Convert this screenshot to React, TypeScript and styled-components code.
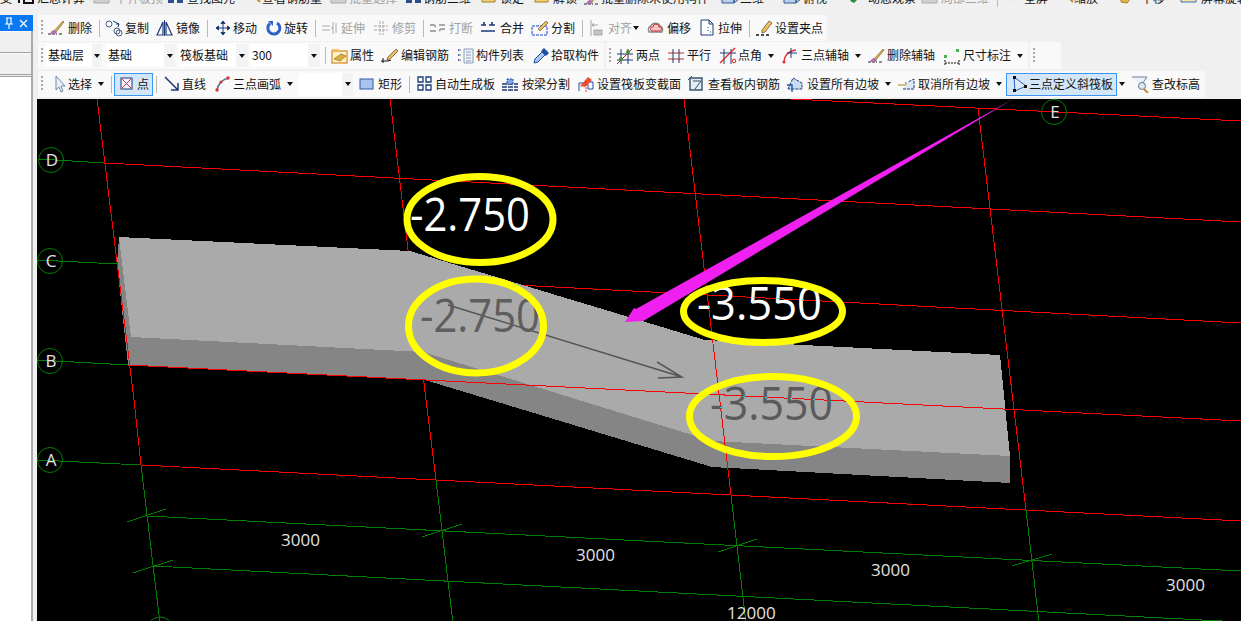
import React from 'react';
import styled, { createGlobalStyle } from 'styled-components';

const Global = createGlobalStyle`
  html, body { margin: 0; padding: 0; background: #f0f0f0; overflow: hidden; }
  body { font: 12px "Noto Sans CJK SC", "Liberation Sans", sans-serif; color: #111; }
`;

const Page = styled.div`
  width: 1241px; height: 621px; overflow: hidden; background: #f0f0f0;
  display: flex; flex-direction: column;
`;
const TopStrip = styled.div`height: 15px; flex: none; overflow: hidden;`;
const TopRow = styled.div`display: flex; align-items: center; height: 20px; margin-top: -12px;`;
const Main = styled.div`flex: 1; display: flex; min-height: 0;`;
const Dock = styled.aside`
  width: 33px; flex: none; margin-right: 4px; display: flex; flex-direction: column;
  border-right: 2px solid #a9a9a9; box-sizing: border-box;
`;
const DockHead = styled.div`
  height: 16px; flex: none; background: #0a78f0; color: #fff; margin-right: -2px;
  display: flex; align-items: center; justify-content: space-between; padding: 0 5px 0 4px; box-sizing: border-box;
`;
const DockTab = styled.div`
  height: 22px; flex: none; background: #f0f0f0; border-bottom: 1px solid #a0a0a0;
  border-top: 1px solid #fafafa; box-sizing: border-box;
  &:first-of-type { height: 23px; }
`;
const DockBody = styled.div`flex: 1; background: #fff; margin-top: 1px; border-top: 1px solid #a0a0a0;`;
const Work = styled.div`flex: 1; min-width: 0; display: flex; flex-direction: column;`;
const Row = styled.div<{ $h: number; $gap: number }>`
  display: flex; gap: 2px; padding-left: 1px; flex: none;
  height: ${p => p.$h}px; margin-bottom: ${p => p.$gap}px;
`;
const Bar = styled.div<{ $w: number }>`
  width: ${p => p.$w}px; flex: none; height: 100%; background: #f9f9f9; display: flex; align-items: center;
  border-radius: 2px;
`;
const Grip = styled.div<{ $w: number }>`
  width: ${p => p.$w}px; flex: none; height: 16px; position: relative;
  &::before {
    content: ''; display: block; margin-left: 3px; width: 2px; height: 100%;
    background: repeating-linear-gradient(to bottom, #a6a6a6 0 2px, transparent 2px 4px);
  }
`;
const Tool = styled.div<{ $w: number; $on?: boolean; $off?: boolean }>`
  width: ${p => p.$w}px; flex: none; display: flex; align-items: center; white-space: nowrap; box-sizing: border-box;
  color: ${p => (p.$off ? '#a2a2a2' : '#141414')};
  ${p => p.$on && 'height: 23px; background: #d3e6f8; outline: 1px solid #3a96f0; outline-offset: -1px;'}
`;
const ToolLabel = styled.span`margin-bottom: 2px;`;
const IconSlot = styled.span<{ $w: number; $pad: number }>`
  width: ${p => p.$w}px; padding-left: ${p => p.$pad}px; box-sizing: border-box; flex: none; display: flex; align-items: center;
`;
const Gap = styled.div<{ $w: number }>`width: ${p => p.$w}px; flex: none;`;
const Sep = styled.div<{ $w: number }>`
  width: ${p => p.$w}px; flex: none; height: 17px;
  &::before { content: ''; display: block; width: 1px; height: 100%; background: #b8b8b8; }
`;
const CaretSlot = styled.div<{ $w: number }>`width: ${p => p.$w}px; flex: none; display: flex; align-items: center;`;
const Caret = styled.i`
  display: block; width: 0; height: 0; margin-left: -3px;
  border-left: 3.5px solid transparent; border-right: 3.5px solid transparent; border-top: 4px solid #111;
`;
const Select = styled.div<{ $w: number }>`
  width: ${p => p.$w}px; flex: none; height: 23px; display: flex; background: #fff;
`;
const SelectText = styled.span`flex: 1; line-height: 21px; padding-left: 2px;`;
const SelectArrow = styled.span<{ $w: number }>`
  width: ${p => p.$w}px; flex: none; background: #f3f3f3; display: flex; align-items: center; justify-content: center;
  & > i { margin-left: 0; }
`;
const Canvas = styled.main`flex: 1; background: #000; min-height: 0;`;
const Scene = styled.svg`display: block; width: 100%; height: 100%;`;
const Grid = styled.polyline<{ $c: string }>`
  fill: none; stroke: ${p => p.$c}; stroke-width: 1; shape-rendering: crispEdges;
`;
const Face = styled.polygon<{ $c: string }>`fill: ${p => p.$c}; shape-rendering: crispEdges;`;
const Ring = styled.ellipse`fill: none; stroke: #ffff00; stroke-width: 7;`;
const AxisCircle = styled.circle`fill: none; stroke: #008000; stroke-width: 1;`;
const AxisName = styled.text`
  font-family: "Open Sans", sans-serif; font-size: 17px; fill: #e4e4e4; text-anchor: middle;
`;
const Dim = styled.text`font-family: "Open Sans", sans-serif; font-size: 17px; fill: #e2e2e2;`;
const Elev = styled.text<{ $c: string }>`font-family: "Open Sans", sans-serif; font-size: 46px; fill: ${p => p.$c};`;
const Direction = styled.path`fill: none; stroke: #555; stroke-width: 1.5;`;
const Speck = styled.rect`fill: #20e0e0; width: 2px; height: 1px;`;

const N = '#1c3a78';
const G = '#a8a8a8';
const R = '#e03030';
const I: Record<string, React.ReactNode> = {
  broom: <><path d="M1 15h9M12 15h4" stroke="#222" strokeDasharray="3 1" /><path d="M7 12 16 2l1 1-8 10z" fill="#d8b24a" stroke="#6a5a20" strokeWidth=".6" /><path d="M3 15c1-3 3-4 4-4l3 2c-1 1-1 2-2 2z" fill="#b070b0" /></>,
  copy: <><circle cx="4" cy="5" r="3" fill="none" stroke="#48607e" /><circle cx="12" cy="12" r="3" fill="none" stroke="#48607e" /><circle cx="14" cy="14" r="3" fill="none" stroke="#48607e" /><path d="M8 2l6 3M14 5l-3 0M14 5l-1 3" stroke={N} fill="none" /></>,
  mirror: <><path d="M1 16 7 3v13z" fill="none" stroke={N} strokeWidth="1.2" /><path d="M16 16 10 3v13z" fill="none" stroke={N} strokeWidth="1.2" /><path d="M8.5 1v16" stroke={N} /></>,
  move: <path d="M9 2v14M2 9h14M9 2 7 4.5h4zM9 16l-2-2.5h4zM2 9l2.5-2v4zM16 9l-2.5-2v4z" fill={N} stroke={N} />,
  rotate: <><path d="M5 4.5a6 6 0 1 0 7-.5" fill="none" stroke="#2f62c8" strokeWidth="3" /><path d="M3 2h5v5z" fill="#2f62c8" /></>,
  extend: <path d="M1 7h8M1 11h8M12 3v12M15 4v10M10 9h2" stroke={G} fill="none" />,
  trim: <path d="M1 7h14M1 11h14M7 2v14M10 2v14" stroke={G} fill="none" strokeDasharray="3 1" />,
  brk: <path d="M1 6h4l2 2M10 6h6M1 12h6M10 12l2-2h4" stroke={G} strokeWidth="2" fill="none" />,
  merge: <path d="M1 6h5M9 6h6M1 12h14M4 3v3M12 3v3" stroke={N} strokeWidth="1.6" fill="none" />,
  split: <><rect x="1" y="7" width="15" height="9" fill="none" stroke="#1a40d0" strokeDasharray="3 1" /><path d="M7 10 15 2l2 2-8 8z" fill="#e8c060" stroke="#504020" strokeWidth=".6" /></>,
  align: <path d="M2 1v16M5 4l-2 2 2 2M4 6h5M5 11h8v5H5z" fill="#c4c4c4" stroke={G} />,
  offset: <><path d="M2 13a4 4 0 0 1 2-6 5 5 0 0 1 9 0 4 4 0 0 1 2 6z" fill="#f4f4f4" stroke="#888" strokeWidth="1.4" /><path d="M5 12a2 2 0 0 1 1-4 3 3 0 0 1 6 0 2 2 0 0 1 1 4z" fill="#f7c4c4" stroke="#d03030" /></>,
  stretch: <path d="M2 1h8l4 4v11H2zM10 1v4h4M9 8v1M9 11v1M11 13h1" fill="#fff" stroke={N} />,
  grip: <><path d="M1 16h3M6 16h3M11 16h3" stroke="#111" strokeWidth="1.5" /><path d="M7 11 14 2l3 2-7 9-3 1z" fill="#e8c060" stroke="#704020" strokeWidth=".7" /></>,
  prop: <><rect x="1" y="4" width="15" height="12" fill="#fff0c8" stroke="#d89030" strokeWidth="1.3" /><path d="M3 12 10 7l5 2-6 5z" fill="#d8b040" stroke="#886018" strokeWidth=".6" /><path d="M1 2h7v2H1z" fill="#f0c070" /></>,
  edit: <><path d="M0 14h7l3-1" stroke="#111" fill="none" /><path d="M7 10 15 2l2 2-8 8-3 1z" fill="#e8c060" stroke="#704020" strokeWidth=".7" /><path d="M2 11v5" stroke="#111" /></>,
  list: <><path d="M7 2h9v14H7z" fill="#eef3fa" stroke="#8a9cb4" /><path d="M9 5h5M9 8h5M9 11h5M9 14h5" stroke="#8a9cb4" /><path d="M1 3h3M1 8h3M1 13h3" stroke={N} strokeWidth="1.4" strokeDasharray="1.5 1" /></>,
  pick: <><path d="M2 16l1-4 7-7 3 3-7 7z" fill="#a8c8f0" stroke="#2050a0" /><path d="M9 4l3-3 5 5-3 3z" fill="#2050a0" /></>,
  two: <><path d="M5 2v15M12 2v15M1 7h16M1 13h16" stroke={N} fill="none" /><path d="M1 17 16 2" stroke="#c82020" /><circle cx="12" cy="5" r="2" fill="#4a9030" /><circle cx="5" cy="12" r="2" fill="#4a9030" /></>,
  par2: <><path d="M1 6h16M1 12h16" stroke="#c02828" /><path d="M6 2v14M12 2v14" stroke={N} /></>,
  ang: <><path d="M5 2v15M12 2v15M1 6h16" stroke={N} /><path d="M1 16 16 1" stroke="#e02020" strokeWidth="1.3" /><circle cx="15" cy="14" r="1.8" fill="none" stroke="#e02020" /></>,
  arcx: <><path d="M3 16C3 8 8 4 15 3" fill="none" stroke="#e03030" strokeWidth="1.3" /><path d="M10 1v10M6 6h10" stroke={N} /><circle cx="3" cy="15" r="1.5" fill="#e03030" /></>,
  dim: <><path d="M2 16h14M2 13v5M16 13v5" stroke="#111" strokeDasharray="2 1" /><rect x="1" y="8" width="3" height="3" fill="#50b050" /><rect x="13" y="2" width="3" height="3" fill="#50b050" /></>,
  sel: <path d="M5 1v14l3-3 2 5 2-1-2-5h4z" fill="#e8f0fa" stroke="#7088a8" />,
  pt: <><rect x="2" y="3" width="11" height="11" fill="#eef4fc" stroke={N} /><path d="M2 3l11 11M13 3 2 14" stroke="#e03050" /></>,
  line: <path d="M2 2 15 15M15 8v7H8" fill="none" stroke={N} strokeWidth="1.5" />,
  arc: <><path d="M3 15C4 9 8 5 14 3" fill="none" stroke="#507090" strokeWidth="1.5" /><circle cx="3" cy="15" r="1.7" fill={R} /><circle cx="7" cy="7" r="1.5" fill={R} /><circle cx="14" cy="3" r="1.7" fill={R} /></>,
  rect: <rect x="2" y="4" width="13" height="10" fill="#a8c4ee" stroke="#3058a8" />,
  auto: <path d="M2 2h5v5H2zM10 2h5v5h-5zM2 10h5v5H2zM10 10h5v5h-5z" fill="#fff" stroke={N} strokeWidth="1.3" />,
  beam: <><path d="M1 9h16M1 15h16M1 12h16" stroke={N} strokeDasharray="5 1" strokeWidth="1.4" /><path d="M6 4h6v5H6z" fill="#80a8e8" stroke="#2850a0" strokeDasharray="2 1" /></>,
  vary: <><path d="M2 16V8h9v6h5V7h-5" fill="none" stroke="#1850a8" /><path d="M3 11 11 2l4 3-7 7z" fill="#f05030" /><path d="M9 6v12" stroke="#e03030" strokeDasharray="2 1" /></>,
  view: <><path d="M3 3h12v12H3z" fill="#e4ecf6" stroke="#38506c" strokeWidth="1.4" /><path d="M6 6h8L8 14" fill="none" stroke="#38506c" /><path d="M1 5 5 1" stroke="#38506c" /></>,
  setb: <><path d="M2 14 7 3l9 5v6z" fill="#c8dcf4" stroke={N} strokeDasharray="3 1" /><path d="M1 10h5v7" fill="none" stroke="#1850a8" strokeWidth="1.3" /></>,
  cancel: <><path d="M1 10h10M8 7l4 3-4 3" fill="#f0c850" stroke="#a08020" /><path d="M6 14h11V4l-6 3" fill="#dce8f8" stroke={N} strokeDasharray="3 1" /></>,
  slab: <><path d="M3 2 4 16 15 11z" fill="#dce8fa" stroke="#2860c0" /><rect x="2" y="1" width="3" height="3" fill="#111" /><rect x="2" y="14" width="3" height="3" fill="#111" /><rect x="13" y="10" width="3" height="3" fill="#111" /></>,
  elev: <><path d="M1 2h15l-5 7v3" fill="#eef2f8" stroke="#6880a0" /><circle cx="11" cy="11" r="3.5" fill="#dce8f4" stroke="#6a7a88" /><path d="M13 14l4 4" stroke="#c08838" strokeWidth="2" /></>,
  gray: <path d="M1 0h15v14H1z" fill="#cfcfcf" stroke="#aaa" />,
  blue: <path d="M1 0h6v14H1zM10 0h6v14h-6z" fill="#2c4f8c" />,
  glass: <><circle cx="8" cy="4" r="6" fill="#cfe0f2" stroke="#7088a0" /><path d="M12 8l5 5" stroke="#c08838" strokeWidth="2" /></>,
  lock: <path d="M2 0h13v13H2z" fill="#f0d070" stroke="#a08028" />,
  cube: <path d="M1 0h12v14H1zM13 0l5-3v13l-5 4z" fill="#b8d0f0" stroke="#34588c" />,
  green: <path d="M2 12 14 0l3 3L6 14z" fill="#2c8a3c" />,
  hand: <path d="M3 13V0h10v9l-4 5z" fill="#e0b850" stroke="#a88020" />,
  round: <circle cx="9" cy="3" r="8" fill="#3c6cb8" stroke="#d0d8e8" />,
  multi: <path d="M1 0h15v13H1z" fill="#f4e4a0" stroke="#3870c8" />,
  mark: <path d="M1 0v14M6 0h9v14H6z" fill="none" stroke="#111" strokeWidth="2" />,
};
const Icon = ({ k }: { k: string }) => (
  <svg width="18" height="18" viewBox="0 0 18 18" style={{ flex: 'none', display: 'block' }}>{I[k]}</svg>
);

type E =
  | { x: number; kind: 'tool'; i?: string; t?: string; tx: number; on?: boolean; off?: boolean; pad?: number }
  | { x: number; kind: 'grip' | 'sep' | 'caret' | 'gap' }
  | { x: number; kind: 'sel'; t: string; a: number; end: number };
const T = (x: number, i: string | undefined, t: string, tx: number, o: { on?: boolean; off?: boolean; pad?: number } = {}): E => ({ x, kind: 'tool', i, t, tx, ...o });
const S = (x: number): E => ({ x, kind: 'sep' });
const C = (x: number): E => ({ x, kind: 'caret' });
const Gp = (x: number): E => ({ x, kind: 'gap' });
const Gr = (x: number): E => ({ x, kind: 'grip' });
const Sel = (x: number, t: string, a: number, end: number): E => ({ x, kind: 'sel', t, a, end });

const renderEntries = (list: E[], end: number) =>
  list.map((e, n) => {
    const w = (n + 1 < list.length ? list[n + 1].x : end) - e.x;
    switch (e.kind) {
      case 'grip': return <Grip key={n} $w={w} />;
      case 'sep': return <Sep key={n} $w={w} />;
      case 'gap': return <Gap key={n} $w={w} />;
      case 'caret': return <CaretSlot key={n} $w={w}><Caret /></CaretSlot>;
      case 'sel': return (
        <React.Fragment key={n}>
          <Select $w={e.end - e.x}>
            <SelectText>{e.t}</SelectText>
            <SelectArrow $w={e.end - e.a}><Caret /></SelectArrow>
          </Select>
          <Gap $w={w - (e.end - e.x)} />
        </React.Fragment>
      );
      default: return (
        <Tool key={n} $w={w} $on={e.on} $off={e.off}>
          <IconSlot $w={e.tx - e.x} $pad={e.pad ?? 0}>{e.i && <Icon k={e.i} />}</IconSlot>
          <ToolLabel>{e.t}</ToolLabel>
        </Tool>
      );
    }
  });

const off = { off: true };
const top: E[] = [
  T(0, undefined, '支', 0), T(18, 'mark', '汇总计算', 37), T(93, 'gray', '平齐板顶', 115, off), T(167, 'blue', '查找图元', 187),
  T(243, 'glass', '查看钢筋量', 262), T(330, 'gray', '批量选择', 349, off), T(405, 'blue', '钢筋三维', 423), T(480, 'lock', '锁定', 500),
  T(533, 'lock', '解锁', 553), T(583, 'broom', '批量删除未使用构件', 601), T(721, 'cube', '三维', 740), T(783, 'cube', '俯视', 803),
  T(848, 'green', '动态观察', 868), T(921, 'gray', '局部三维', 941, off), S(997), T(1003, 'round', '全屏', 1024), T(1056, 'glass', '缩放', 1074),
  T(1118, 'hand', '平移', 1141), T(1180, 'multi', '屏幕旋转', 1201),
];
const row1: E[] = [
  Gr(38), T(47, 'broom', '删除', 68), S(99), T(105, 'copy', '复制', 125), T(156, 'mirror', '镜像', 176), S(207), T(214, 'move', '移动', 233),
  T(265, 'rotate', '旋转', 284), S(315), T(321, 'extend', '延伸', 341, off), T(373, 'trim', '修剪', 392, off), S(423), T(429, 'brk', '打断', 449, off),
  T(480, 'merge', '合并', 500), T(531, 'split', '分割', 551), S(582), T(589, 'align', '对齐', 608, off), C(636), T(647, 'offset', '偏移', 667),
  T(699, 'stretch', '拉伸', 718), S(749), T(755, 'grip', '设置夹点', 775),
];
const row2a: E[] = [
  Gr(38), Sel(46, '基础层', 92, 102), Sel(106, '基础', 164, 175), Sel(178, '筏板基础', 236, 248), Sel(250, '300', 308, 320), S(325),
  T(331, 'prop', '属性', 350), T(381, 'edit', '编辑钢筋', 401), T(457, 'list', '构件列表', 476), T(532, 'pick', '拾取构件', 551),
];
const row2b: E[] = [
  Gr(606), T(616, 'two', '两点', 636), T(667, 'par2', '平行', 687), T(719, 'ang', '点角', 738), C(771), T(781, 'arcx', '三点辅轴', 801), C(858),
  T(867, 'broom', '删除辅轴', 887), T(943, 'dim', '尺寸标注', 963), C(1020),
];
const row3: E[] = [
  Gr(38), T(51, 'sel', '选择', 68), C(101), S(111), T(114, 'pt', '点', 137, { on: true, pad: 5 }), Gp(153), S(156), T(163, 'line', '直线', 182),
  T(214, 'arc', '三点画弧', 233), C(290), Sel(298, '', 342, 353), T(358, 'rect', '矩形', 378), S(409), T(416, 'auto', '自动生成板', 435),
  T(501, 'beam', '按梁分割', 522), T(577, 'vary', '设置筏板变截面', 597), T(687, 'view', '查看板内钢筋', 708), T(786, 'setb', '设置所有边坡', 807), C(888),
  T(897, 'cancel', '取消所有边坡', 918), C(999), T(1006, 'slab', '三点定义斜筏板', 1029, { on: true, pad: 5 }), Gp(1117), C(1122), T(1131, 'elev', '查改标高', 1152),
];

const grid: [string, string][] = [
  ['#ff0000', '730,96 1241,121'],
  ['#008000', '38,159 105,163'],
  ['#ff0000', '105,163 1241,222'],
  ['#008000', '38,260 117,264'],
  ['#ff0000', '117,264 1241,323'],
  ['#008000', '38,360 128,365'],
  ['#008000', '38,460 141,465'],
  ['#ff0000', '141,465 1241,521'],
  ['#008000', '147,516 1241,571'],
  ['#008000', '153,566 1241,622'],
  ['#ff0000', '390,99 426,400 436,480'],
  ['#008000', '436,480 455,640'],
  ['#ff0000', '978,108 1026,510'],
  ['#008000', '1026,510 1041,640'],
  ['#008000', '141,465 162,640'],
  ['#008000', '731,495 748,640'],
  ['#008000', '127,522 166,509'],
  ['#008000', '422,537 462,524'],
  ['#008000', '718,552 757,539'],
  ['#008000', '1012,566 1052,554'],
  ['#008000', '133,573 173,560'],
];
const axes: [string, number, number][] = [['D', 51, 160], ['C', 50, 261], ['B', 50, 361], ['A', 50, 460], ['E', 1054, 112]];
const dims: [string, number, number][] = [['3000', 281, 546], ['3000', 576, 561], ['3000', 871, 576], ['3000', 1166, 591], ['12000', 727, 619]];
const specks: [number, number][] = [[753, 297], [777, 298], [802, 299], [708, 307], [743, 396], [765, 397], [790, 398], [813, 399], [830, 401], [720, 407]];

export default function App() {
  return (
    <Page>
      <Global />
      <TopStrip><TopRow>{renderEntries(top, 1241)}</TopRow></TopStrip>
      <Main>
        <Dock>
          <DockHead>
            <svg width="10" height="12" viewBox="0 0 10 12"><path d="M2 1h6M3 1v6M7 1v6M1 7h8M5 7v5" stroke="#fff" fill="none" strokeWidth="1.2" /></svg>
            <svg width="9" height="9" viewBox="0 0 9 9"><path d="M1 1l7 7M8 1 1 8" stroke="#fff" strokeWidth="1.2" /></svg>
          </DockHead>
          <DockTab /><DockTab />
          <DockBody />
        </Dock>
        <Work>
          <Row $h={26} $gap={1}><Bar $w={789}>{renderEntries(row1, 827)}</Bar></Row>
          <Row $h={27} $gap={2}>
            <Bar $w={566}>{renderEntries(row2a, 604)}</Bar>
            <Bar $w={422}>{renderEntries(row2b, 1028)}</Bar>
            <Bar $w={31}><Grip $w={8} /></Bar>
          </Row>
          <Row $h={26} $gap={2}><Bar $w={1167}>{renderEntries(row3, 1205)}</Bar></Row>
          <Canvas>
            <Scene viewBox="37 99 1204 522" preserveAspectRatio="xMinYMin slice">
              {grid.map(([c, p], n) => <Grid key={n} $c={c} points={p} />)}
              <AxisCircle cx={160} cy={630} r={13} />
              {axes.map(([l, x, y]) => (
                <g key={l}>
                  <AxisCircle cx={x} cy={y} r={12.5} />
                  <AxisName x={x + 1} y={y + 6}>{l}</AxisName>
                </g>
              ))}
              {dims.map(([l, x, y], n) => <Dim key={n} x={x} y={y}>{l}</Dim>)}
              <Face $c="#858585" points="119,237 131,337 128,365 117,264" />
              <Face $c="#858585" points="131,337 423,352 712,441 1010,456 1010,483 712,467 425,380 128,365" />
              <Face $c="#aaaaaa" points="119,237 410,251 705,340 1000,355 1010,456 712,441 423,352 131,337" />
              <Grid $c="#ff0000" points="97,99 134,400 141,465" />
              <Grid $c="#ff0000" points="128,365 1241,421" />
              <Grid $c="#ff0000" points="684,99 731,495" />
              <Direction d="M448 305 682 377M657 362 682 377 658 378" />
              <Elev $c="#ffffff" x={410} y={231} textLength={120} lengthAdjust="spacingAndGlyphs">-2.750</Elev>
              <Elev $c="#5e5e5e" x={420} y={332} textLength={120} lengthAdjust="spacingAndGlyphs">-2.750</Elev>
              <Elev $c="#ffffff" x={697} y={320} textLength={125} lengthAdjust="spacingAndGlyphs">-3.550</Elev>
              <Elev $c="#5a5a5a" x={710} y={420} textLength={123} lengthAdjust="spacingAndGlyphs">-3.550</Elev>
              {specks.map(([x, y]) => <Speck key={x} x={x} y={y} />)}
              <polygon points="625,322 634,308 636,309 1015,98 645,320 643,321" fill="#f020f0" />
              <Ring cx={480} cy={219.5} rx={73} ry={43} />
              <Ring cx={476} cy={326} rx={67.5} ry={47} />
              <Ring cx={763} cy={311.5} rx={79.5} ry={31} />
              <Ring cx={773} cy={416.5} rx={83.5} ry={40} />
            </Scene>
          </Canvas>
        </Work>
      </Main>
    </Page>
  );
}
